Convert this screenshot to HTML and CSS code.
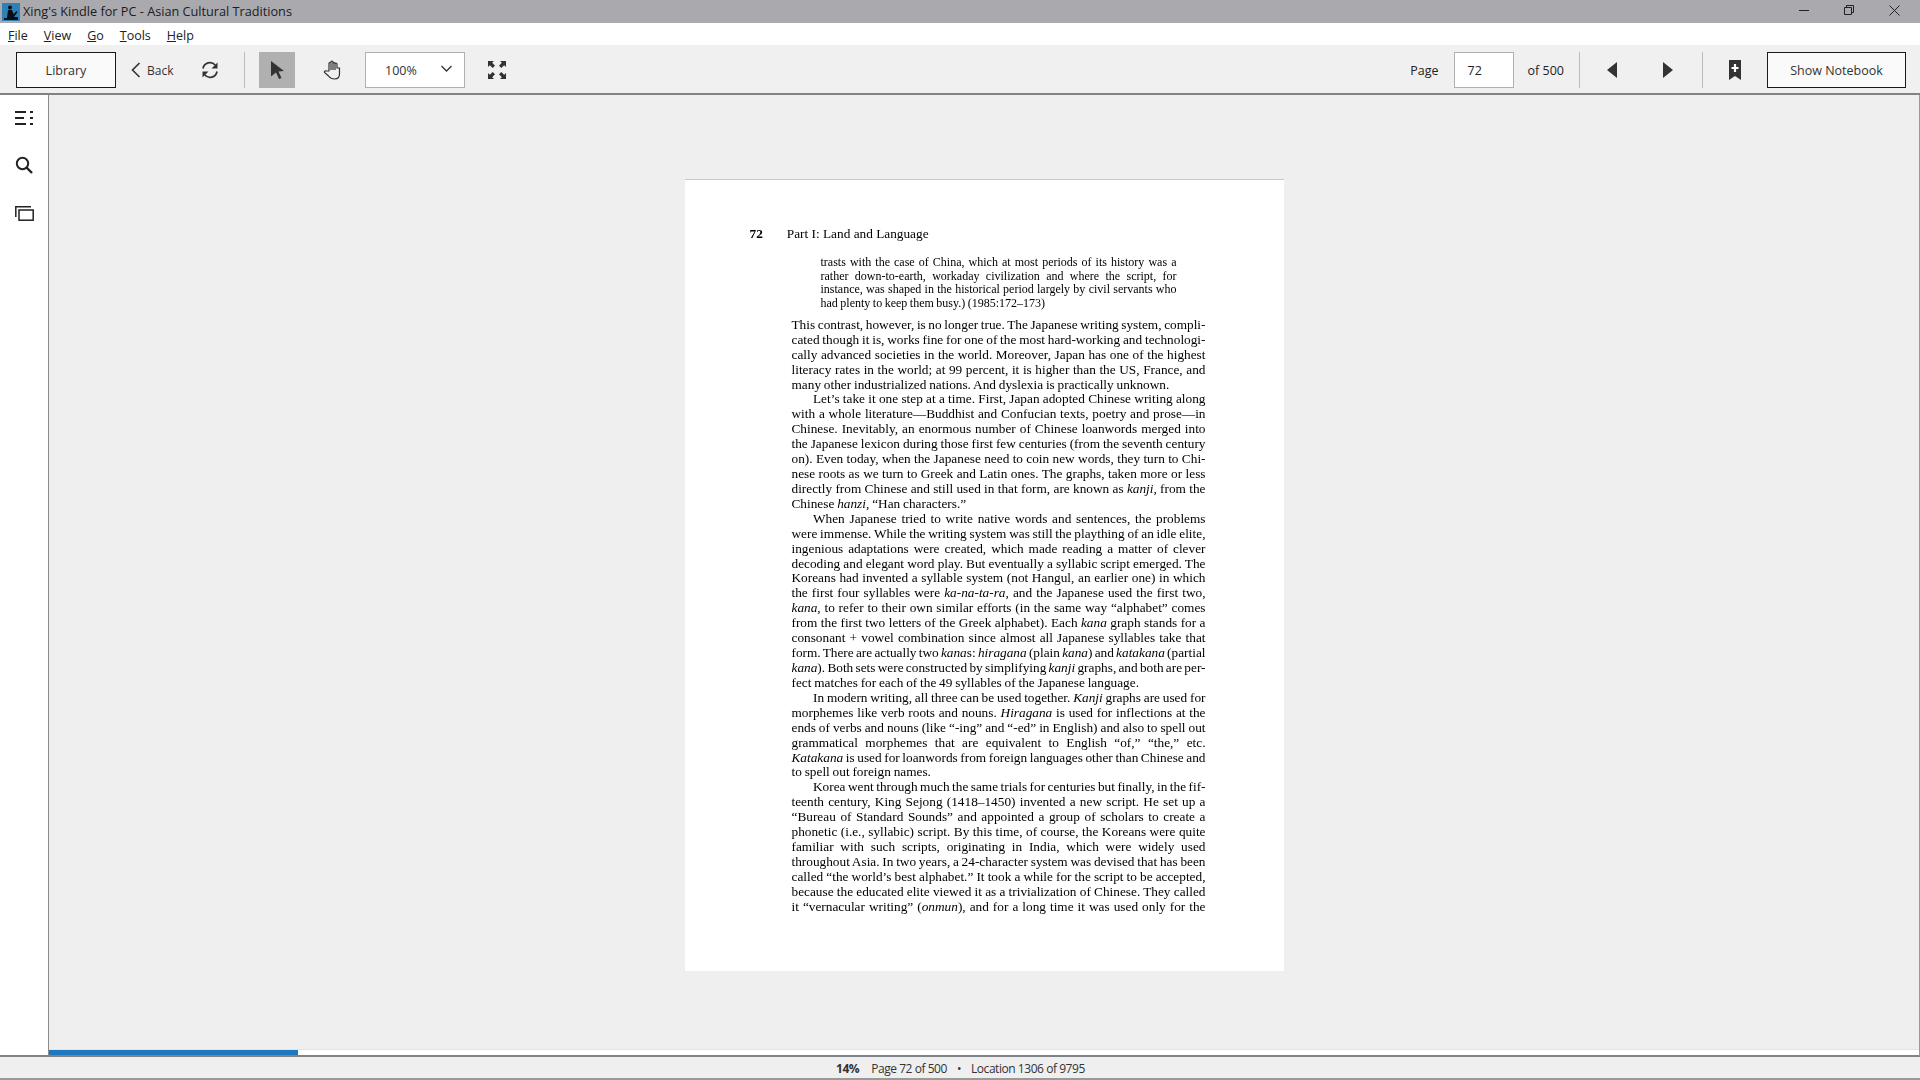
FILE: index.html
```html
<!DOCTYPE html>
<html lang="en">

<head>
    <meta charset="UTF-8">
    <title>Xing's Kindle for PC - Asian Cultural Traditions</title>
    <link rel="stylesheet" href="styles.css">
</head>

<body>
    <header class="titlebar">
        <svg class="appicon" width="18" height="18" viewBox="0 0 18 18">
            <rect width="18" height="18" fill="#2f7fb8" />
            <path d="M8 2.500a2 2 0 1 1 0 4 2 2 0 0 1 0-4zM6 7h4l1.500 4 3-3 1 1-3.500 5H16v3H2v-2h3z" fill="#0b0f14" />
        </svg>
        <span class="titletext">Xing's Kindle for PC - Asian Cultural Traditions</span>
        <div class="winbtns">
            <svg width="10" height="10" viewBox="0 0 10 10"><path d="M0 5.500h10" stroke="#222" fill="none" /></svg>
            <svg width="10" height="10" viewBox="0 0 10 10"><path d="M.5 2.500h7v7h-7zM2.500 2.500v-2h7v7h-2" stroke="#222" fill="none" /></svg>
            <svg width="11" height="11" viewBox="0 0 11 11"><path d="M.5.500l10 10M10.500.500l-10 10" stroke="#222" fill="none" /></svg>
        </div>
    </header>

    <nav class="menubar">
        <span><u>F</u>ile</span>
        <span><u>V</u>iew</span>
        <span><u>G</u>o</span>
        <span><u>T</u>ools</span>
        <span><u>H</u>elp</span>
    </nav>

    <div class="toolbar">
        <button class="btn library">Library</button>
        <div class="back">
            <svg width="10" height="16" viewBox="0 0 10 16"><path d="M8.500 1L1.500 8l7 7" stroke="#333" stroke-width="1.600" fill="none" /></svg>
            <span>Back</span>
        </div>
        <svg class="sync" width="18" height="18" viewBox="0 0 18 18">
            <path d="M2 7.500A7 7 0 0 1 14.300 4.200" stroke="#333" stroke-width="1.700" fill="none" />
            <path d="M16.500 1.500v6h-6z" fill="#333" />
            <path d="M16 10.500A7 7 0 0 1 3.700 13.800" stroke="#333" stroke-width="1.700" fill="none" />
            <path d="M1.500 16.500v-6h6z" fill="#333" />
        </svg>
        <div class="sep sep-tools"></div>
        <div class="tool active">
            <svg width="13" height="18" viewBox="0 0 13 18"><path d="M0 0l13 10-5.500.500 3 6.500-2.500 1-3-6.500-5 4z" fill="#333" /></svg>
        </div>
        <svg class="hand" width="20" height="20" viewBox="0 0 20 20">
            <path d="M6 11V3.500a1 1 0 0 1 2 0V2a1 1 0 0 1 2 0v1.500a1 1 0 0 1 2 0V4a1 1 0 0 1 2 0v4c2 0 2.500 0 2.500 0v6c0 3-2 5-5 5-3.500 0-4.500-1-6-3l-4-3.500c-.5-1 .5-2 1.800-1.500z" stroke="#333" stroke-width="1.200" fill="#f0f0f0" />
            <path d="M8 3.500V10M10 3v7M12 3.500V10" stroke="#333" stroke-width="1.200" fill="none" />
        </svg>
        <div class="zoomselect">
            <span>100%</span>
            <svg width="11" height="7" viewBox="0 0 11 7"><path d="M.5 1l5 5 5-5" stroke="#333" stroke-width="1.300" fill="none" /></svg>
        </div>
        <svg class="fullscreen" width="18" height="18" viewBox="0 0 18 18">
            <path d="M0 0h6L4.200 1.800 7 4.700 4.700 7 1.800 4.200 0 6zM18 0v6l-1.800-1.800L13.300 7 11 4.700l2.800-2.900L12 0zM0 18v-6l1.800 1.800L4.700 11 7 13.300l-2.800 2.900L6 18zM18 18h-6l1.800-1.800L11 13.300l2.300-2.300 2.900 2.800L18 12z" fill="#333" />
        </svg>

        <span class="pagelabel">Page</span>
        <div class="pageinput">72</div>
        <span class="oftotal">of 500</span>
        <div class="sep sep-prev"></div>
        <svg class="prev" width="10" height="16" viewBox="0 0 10 16"><path d="M10 0v16L0 8z" fill="#333" /></svg>
        <svg class="next" width="10" height="16" viewBox="0 0 10 16"><path d="M0 0v16l10-8z" fill="#333" /></svg>
        <div class="sep sep-mark"></div>
        <svg class="mark" width="12" height="20" viewBox="0 0 12 20">
            <path d="M0 0h12v20l-6-4-6 4z" fill="#333" />
            <path d="M6 4v8M2.500 8h7" stroke="#fff" stroke-width="2.200" />
        </svg>
        <button class="btn notebook">Show Notebook</button>
    </div>

    <div class="workspace">
        <aside class="sidebar">
            <svg width="18" height="14" viewBox="0 0 18 14">
                <path d="M0 1h11M15 1h3M0 7h9M15 7h3M0 13h11M15 13h3" stroke="#222" stroke-width="1.800" fill="none" />
            </svg>
            <svg width="18" height="18" viewBox="0 0 18 18">
                <circle cx="7.500" cy="7.500" r="5.700" stroke="#222" stroke-width="2" fill="none" />
                <path d="M11.500 11.500l5.500 5.500" stroke="#222" stroke-width="2.400" />
            </svg>
            <svg class="layers" width="19" height="15" viewBox="0 0 19 15">
                <path d="M.8 11V.8H16" stroke="#222" stroke-width="1.500" fill="none" />
                <rect x="4" y="4" width="14.200" height="10.200" stroke="#222" stroke-width="1.500" fill="none" />
            </svg>
        </aside>

        <main class="reader">
            <div class="viewer">
                <article class="page">
                    <div class="runhead">
                        <b>72</b>
                        <span>Part I: Land and Language</span>
                    </div>

                    <div class="quote">
                        <div class="ln">trasts with the case of China, which at most periods of its history was a</div>
                        <div class="ln">rather down-to-earth, workaday civilization and where the script, for</div>
                        <div class="ln">instance, was shaped in the historical period largely by civil servants who</div>
                        <div class="ln end">had plenty to keep them busy.) (1985:172–173)</div>
                    </div>

                    <div class="bodytext">
                        <div class="ln">This contrast, however, is no longer true. The Japanese writing system, compli-</div>
                        <div class="ln">cated though it is, works fine for one of the most hard-working and technologi-</div>
                        <div class="ln">cally advanced societies in the world. Moreover, Japan has one of the highest</div>
                        <div class="ln">literacy rates in the world; at 99 percent, it is higher than the US, France, and</div>
                        <div class="ln end">many other industrialized nations. And dyslexia is practically unknown.</div>
                        <div class="ln ind">Let’s take it one step at a time. First, Japan adopted Chinese writing along</div>
                        <div class="ln">with a whole literature—Buddhist and Confucian texts, poetry and prose—in</div>
                        <div class="ln">Chinese. Inevitably, an enormous number of Chinese loanwords merged into</div>
                        <div class="ln">the Japanese lexicon during those first few centuries (from the seventh century</div>
                        <div class="ln">on). Even today, when the Japanese need to coin new words, they turn to Chi-</div>
                        <div class="ln">nese roots as we turn to Greek and Latin ones. The graphs, taken more or less</div>
                        <div class="ln">directly from Chinese and still used in that form, are known as <i>kanji</i>, from the</div>
                        <div class="ln end">Chinese <i>hanzi</i>, “Han characters.”</div>
                        <div class="ln ind">When Japanese tried to write native words and sentences, the problems</div>
                        <div class="ln">were immense. While the writing system was still the plaything of an idle elite,</div>
                        <div class="ln">ingenious adaptations were created, which made reading a matter of clever</div>
                        <div class="ln">decoding and elegant word play. But eventually a syllabic script emerged. The</div>
                        <div class="ln">Koreans had invented a syllable system (not Hangul, an earlier one) in which</div>
                        <div class="ln">the first four syllables were <i>ka-na-ta-ra</i>, and the Japanese used the first two,</div>
                        <div class="ln"><i>kana</i>, to refer to their own similar efforts (in the same way “alphabet” comes</div>
                        <div class="ln">from the first two letters of the Greek alphabet). Each <i>kana</i> graph stands for a</div>
                        <div class="ln">consonant + vowel combination since almost all Japanese syllables take that</div>
                        <div class="ln">form. There are actually two <i>kana</i>s: <i>hiragana</i> (plain <i>kana</i>) and <i>katakana</i> (partial</div>
                        <div class="ln"><i>kana</i>). Both sets were constructed by simplifying <i>kanji</i> graphs, and both are per-</div>
                        <div class="ln end">fect matches for each of the 49 syllables of the Japanese language.</div>
                        <div class="ln ind">In modern writing, all three can be used together. <i>Kanji</i> graphs are used for</div>
                        <div class="ln">morphemes like verb roots and nouns. <i>Hiragana</i> is used for inflections at the</div>
                        <div class="ln">ends of verbs and nouns (like “-ing” and “-ed” in English) and also to spell out</div>
                        <div class="ln">grammatical morphemes that are equivalent to English “of,” “the,” etc.</div>
                        <div class="ln"><i>Katakana</i> is used for loanwords from foreign languages other than Chinese and</div>
                        <div class="ln end">to spell out foreign names.</div>
                        <div class="ln ind">Korea went through much the same trials for centuries but finally, in the fif-</div>
                        <div class="ln">teenth century, King Sejong (1418–1450) invented a new script. He set up a</div>
                        <div class="ln">“Bureau of Standard Sounds” and appointed a group of scholars to create a</div>
                        <div class="ln">phonetic (i.e., syllabic) script. By this time, of course, the Koreans were quite</div>
                        <div class="ln">familiar with such scripts, originating in India, which were widely used</div>
                        <div class="ln">throughout Asia. In two years, a 24-character system was devised that has been</div>
                        <div class="ln">called “the world’s best alphabet.” It took a while for the script to be accepted,</div>
                        <div class="ln">because the educated elite viewed it as a trivialization of Chinese. They called</div>
                        <div class="ln">it “vernacular writing” (<i>onmun</i>), and for a long time it was used only for the</div>
                    </div>
                </article>
            </div>
            <div class="progress">
                <div class="progressfill" style="width: 249px"></div>
            </div>
        </main>
    </div>

    <footer class="statusbar">
        <b>14%</b>
        <span class="st-page">Page 72 of 500</span>
        <span class="st-dot">•</span>
        <span class="st-loc">Location 1306 of 9795</span>
    </footer>
</body>

</html>
```

FILE: styles.css
```css
* {
    box-sizing: border-box;
}

body {
    margin: 0;
    height: 1080px;
    overflow: hidden;
    display: flex;
    flex-direction: column;
    font-family: "Open Sans", "Noto Sans", sans-serif;
    font-size: 12px;
    color: #222;
    background-color: #efefef;
}

svg {
    display: block;
    flex: none;
}

/* window title */
.titlebar {
    height: 23px;
    background-color: #aaa9ad;
    display: flex;
    align-items: center;
    padding-left: 2px;
}

.titletext {
    margin-left: 3px;
    margin-bottom: 2px;
    font-size: 12.7px;
    color: #1c1c1c;
}

.winbtns {
    margin-left: auto;
    display: flex;
    align-items: center;
    width: 121px;
    gap: 35px;
    margin-bottom: 3px;
}

/* menu */
.menubar {
    height: 22px;
    background-color: #fff;
    display: flex;
    align-items: center;
    padding-left: 8px;
    padding-top: 2px;
    gap: 16px;
    font-size: 12.5px;
}

/* toolbar */
.toolbar {
    height: 50px;
    background-color: #f0f0f0;
    border-bottom: 2px solid #7f8387;
    padding-top: 7px;
    padding-bottom: 5px;
    display: flex;
    align-items: center;
}

.btn {
    height: 36px;
    border: 1px solid #1a1a1a;
    background-color: #fafafa;
    font-family: inherit;
    font-size: 12.5px;
    color: #333;
    padding: 0;
}

.library {
    width: 100px;
    margin-left: 16px;
}

.back {
    width: 60px;
    margin-left: 15px;
    display: flex;
    align-items: center;
    gap: 6px;
    font-size: 12px;
    color: #333;
}

.sync {
    margin-left: 10px;
}

.sep {
    width: 1px;
    height: 36px;
    background-color: #bbb;
}

.sep-tools {
    margin-left: 25px;
}

.tool {
    width: 36px;
    height: 36px;
    margin-left: 14px;
    display: flex;
    align-items: center;
    justify-content: center;
}

.active {
    background-color: #b0b0b0;
}

.hand {
    margin-left: 28px;
}

.zoomselect {
    width: 100px;
    height: 36px;
    margin-left: 22px;
    border: 1px solid #b0b0b0;
    background-color: #fff;
    display: flex;
    align-items: center;
    padding-left: 19px;
    font-size: 12.5px;
    color: #333;
}

.zoomselect svg {
    margin-left: 24px;
    margin-bottom: 3px;
}

.fullscreen {
    margin-left: 23px;
}

.pagelabel {
    margin-left: auto;
    font-size: 12.5px;
}

.pageinput {
    width: 60px;
    height: 36px;
    margin-left: 15px;
    border: 1px solid #b0b0b0;
    background-color: #fff;
    display: flex;
    align-items: center;
    padding-left: 13px;
    font-size: 12.5px;
}

.oftotal {
    margin-left: 14px;
    font-size: 12.5px;
}

.sep-prev {
    margin-left: 15px;
}

.prev {
    margin-left: 27px;
}

.next {
    margin-left: 46px;
}

.sep-mark {
    margin-left: 29px;
}

.mark {
    margin-left: 26px;
}

.notebook {
    width: 139px;
    margin-left: 26px;
    margin-right: 14px;
}

/* main area */
.workspace {
    height: 962px;
    display: flex;
}

.sidebar {
    width: 49px;
    background-color: #fff;
    border-right: 1px solid #8a8a8a;
    border-bottom: 2px solid #7f8387;
    display: flex;
    flex-direction: column;
    align-items: flex-start;
    padding: 16px 0 0 15px;
    gap: 31px;
}

.layers {
    margin-top: 1px;
}

.reader {
    flex: 1;
    display: flex;
    flex-direction: column;
    border-right: 1px solid #9a9a9a;
    border-bottom: 2px solid #7f8387;
}

.viewer {
    flex: 1;
    display: flex;
    justify-content: center;
    align-items: flex-start;
    padding-top: 84px;
    background-color: #efefef;
    border-bottom: 1px solid #e2e2e2;
}

.progress {
    height: 5px;
    background-color: #fff;
}

.progressfill {
    height: 100%;
    background-color: #1e78bf;
}

/* book page */
.page {
    width: 599px;
    height: 792px;
    background-color: #fff;
    border-top: 1px solid #c8c8c8;
    font-family: "Liberation Serif", "Times New Roman", serif;
    color: #000;
    filter: blur(0.25px);
}

.runhead {
    display: flex;
    font-size: 13.3px;
    line-height: 16px;
    margin-top: 46px;
    padding-left: 65px;
}

.runhead span {
    margin-left: 24px;
}

.quote {
    width: 356px;
    margin-top: 14px;
    margin-left: 136px;
    font-size: 12px;
    line-height: 13.7px;
    word-spacing: -0.5px;
}

.bodytext {
    width: 414px;
    margin-top: 7px;
    margin-left: 107px;
    font-size: 13.3px;
    line-height: 14.92px;
    word-spacing: -1.1px;
}

.ln {
    text-align: justify;
    text-align-last: justify;
    white-space: nowrap;
}

.end {
    text-align-last: left;
    word-spacing: -0.5px;
}

.ind {
    text-indent: 21.5px;
}

/* status */
.statusbar {
    height: 23px;
    background-color: #efefef;
    border-bottom: 2px solid #999;
    display: flex;
    align-items: center;
    padding-left: 836px;
    padding-top: 2px;
    font-size: 12px;
    letter-spacing: -0.45px;
    color: #333;
}

.st-page {
    margin-left: 12px;
}

.st-dot {
    margin-left: 10px;
}

.st-loc {
    margin-left: 10px;
}
```
